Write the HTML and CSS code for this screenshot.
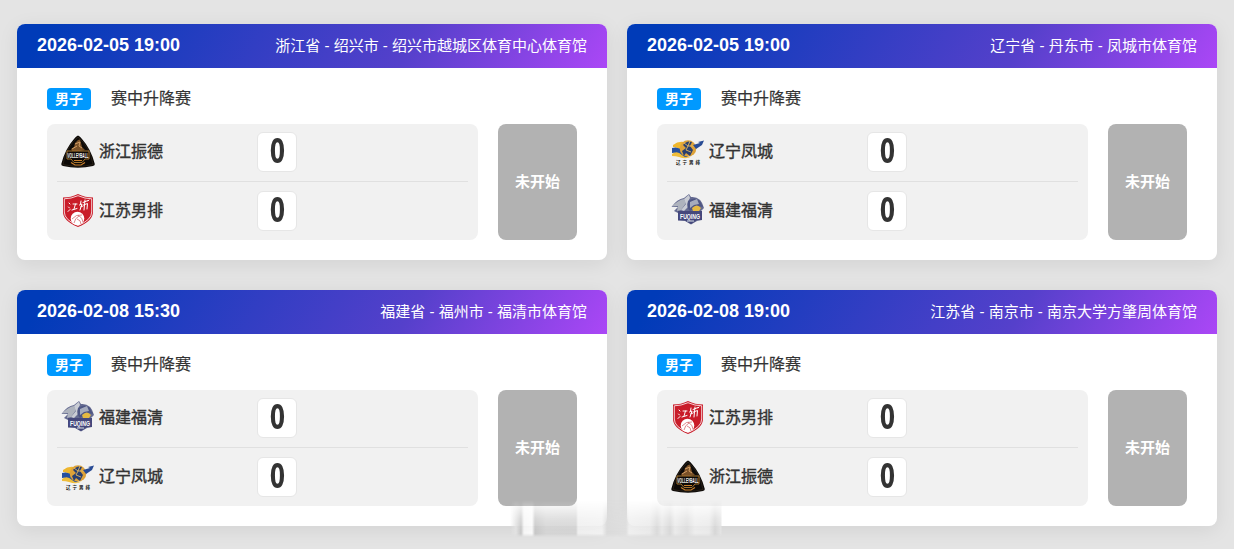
FILE: index.html
```html
<!DOCTYPE html>
<html lang="zh-CN">
<head>
    <meta charset="UTF-8">
    <meta name="viewport" content="width=device-width, initial-scale=1.0">
    <title>赛程</title>
    <link rel="stylesheet" href="styles.css">
</head>
<body>
    <!-- team logos -->
    <svg class="sprite" aria-hidden="true">
        <symbol id="logo-zhejiang" viewBox="0 0 36 36">
            <path d="M18 1.5Q20 2 22 5Q31 15 34.8 30Q35 31.5 33 32Q18 35.5 3 32Q1 31.5 1.3 30Q5 15 14 5Q16 2 18 1.5Z" fill="#0d0a08"/>
            <path d="M18 3Q30 13 33 30.5Q18 34 3 30.5Q6 13 18 3Z" fill="none" stroke="#3f3223" stroke-width=".5"/>
            <path d="M14 13L15 9L18 6L20 5.5L21 9L22 13L25 16L20 17L12 17L11 15Z" fill="#7a5128"/>
            <path d="M15 10L20 8L19 12L22 14M12 15L17 12" fill="none" stroke="#dba66c" stroke-width=".9"/>
            <path d="M7 17H29V25H25L22 28.5H14L11 25H7Z" fill="#0d0a08" stroke="#a3722f" stroke-width="1"/>
            <text x="18" y="24" class="logo-text" font-size="7" textLength="21" lengthAdjust="spacingAndGlyphs" fill="#fff">VOLLEYBALL</text>
            <path d="M14 26.5H22M11 28.5L15 31H21L25 28.5" fill="none" stroke="#c77d2b" stroke-width="1.2"/>
        </symbol>
        <symbol id="logo-jiangsu" viewBox="0 0 36 36">
            <path d="M18 1Q25 4.5 33 4.5V19Q33 28 18 34Q3 28 3 19V4.5Q11 4.5 18 1Z" fill="#c91c29"/>
            <path d="M18 2.7Q25 5.8 31.7 5.8V19Q31.7 27 18 32.5Q4.3 27 4.3 19V5.8Q11 5.8 18 2.7Z" fill="none" stroke="#fff" stroke-width=".8"/>
            <path d="M9 10L10 11M8.5 14L9.5 15M8 18.5L10 16.5M13 11H17M15.5 11L14 16M12 17L17 15.5M21 8L20.5 11M19.5 12L22 11L20 17M20.5 14L23 13M25 7L24 17M23 9.5L28 7.5M23.5 12L27.5 10.5L27 16M28 8L29 7" fill="none" stroke="#fff" stroke-width="1" stroke-linecap="round"/>
            <circle cx="17.5" cy="25.5" r="6.8" fill="#fff"/>
            <path d="M12 26Q16 21 22 22M14 30Q15 25 19 23M18 22Q23 25 23 29M17 26Q21 27 21 31" fill="none" stroke="#d56a70" stroke-width=".8"/>
        </symbol>
        <symbol id="logo-liaoning" viewBox="0 0 36 36">
            <path d="M3 11Q8 7 14 8L16 14L12 17Q7 13 3 13Z" fill="#eeb62e"/>
            <path d="M2 14Q8 12 14 17L18 23Q11 24 7 20Q5 18 2 19Z" fill="#26509f"/>
            <circle cx="18" cy="14.5" r="8.3" fill="#dda23a"/>
            <path d="M13 11Q17 6 22 8L20 12L23 16L20 22L16 19L14 22L12 17L16 14Z" fill="#293f70"/>
            <path d="M14 9L18 12L16 16L21 18M20 7L18 12L24 12" fill="none" stroke="#e3b85e" stroke-width=".9"/>
            <path d="M23 11L30 9L28 8L34 6.5L32 11L26 15Z" fill="#284b94"/>
            <path d="M2 20Q7 16 12 21Q16 25 22 22Q17 26 9 23Q6 22 2 22Z" fill="#efbd3b"/>
            <text x="18" y="30.2" class="logo-text" font-size="4.5" textLength="24" fill="#111">辽宁男排</text>
        </symbol>
        <symbol id="logo-fujian" viewBox="0 0 36 36">
            <path d="M1.5 14Q7 6 14 5L19 1L21 4Q31 3 34 15L31 18L32 27L27 28L21 31.5L15 28L8 27V20L4 18L8 14Z" fill="#656b91"/>
            <path d="M2 13.5Q8 7 14 6L16 10L11 17L7 18L8 13Z" fill="#aeb3bd"/>
            <path d="M14 6L19 1.8L20 5Q17 9 18 14L14 18L11 17L16 11Z" fill="#c9ccd4"/>
            <path d="M18 8Q25 3 30 8L33 14L28 13L20 18Q16 14 18 8Z" fill="#4e5684"/>
            <path d="M20 9L27 6L29 11L24 12L20 15Z" fill="#a5abbd"/>
            <path d="M22 15Q27 10 31 15L29 18H23Z" fill="#e5b942"/>
            <path d="M8 18H32V27H27L21 31L15 27.5H8Z" fill="#45487c"/>
            <text x="20" y="25.5" class="logo-text" font-size="7" textLength="20" lengthAdjust="spacingAndGlyphs" fill="#fff">FUQING</text>
            <path d="M17 28H24" fill="none" stroke="#a9afc5" stroke-width="1.3"/>
        </symbol>
    </svg>

    <main class="match-list">
        <section class="match-card">
            <header class="match-header">
                <span class="match-time">2026-02-05 19:00</span>
                <span class="match-place">浙江省 - 绍兴市 - 绍兴市越城区体育中心体育馆</span>
            </header>
            <div class="match-body">
                <div class="match-type"><span class="badge">男子</span><span class="stage">赛中升降赛</span></div>
                <div class="match-info">
                    <div class="teams">
                        <div class="team"><svg class="logo"><use href="#logo-zhejiang"/></svg><span class="name">浙江振德</span><span class="score"><b>0</b></span></div>
                        <div class="team"><svg class="logo"><use href="#logo-jiangsu"/></svg><span class="name">江苏男排</span><span class="score"><b>0</b></span></div>
                    </div>
                    <div class="status">未开始</div>
                </div>
            </div>
        </section>

        <section class="match-card">
            <header class="match-header">
                <span class="match-time">2026-02-05 19:00</span>
                <span class="match-place">辽宁省 - 丹东市 - 凤城市体育馆</span>
            </header>
            <div class="match-body">
                <div class="match-type"><span class="badge">男子</span><span class="stage">赛中升降赛</span></div>
                <div class="match-info">
                    <div class="teams">
                        <div class="team"><svg class="logo"><use href="#logo-liaoning"/></svg><span class="name">辽宁凤城</span><span class="score"><b>0</b></span></div>
                        <div class="team"><svg class="logo"><use href="#logo-fujian"/></svg><span class="name">福建福清</span><span class="score"><b>0</b></span></div>
                    </div>
                    <div class="status">未开始</div>
                </div>
            </div>
        </section>

        <section class="match-card">
            <header class="match-header">
                <span class="match-time">2026-02-08 15:30</span>
                <span class="match-place">福建省 - 福州市 - 福清市体育馆</span>
            </header>
            <div class="match-body">
                <div class="match-type"><span class="badge">男子</span><span class="stage">赛中升降赛</span></div>
                <div class="match-info">
                    <div class="teams">
                        <div class="team"><svg class="logo"><use href="#logo-fujian"/></svg><span class="name">福建福清</span><span class="score"><b>0</b></span></div>
                        <div class="team"><svg class="logo"><use href="#logo-liaoning"/></svg><span class="name">辽宁凤城</span><span class="score"><b>0</b></span></div>
                    </div>
                    <div class="status">未开始</div>
                </div>
            </div>
        </section>

        <section class="match-card">
            <header class="match-header">
                <span class="match-time">2026-02-08 19:00</span>
                <span class="match-place">江苏省 - 南京市 - 南京大学方肇周体育馆</span>
            </header>
            <div class="match-body">
                <div class="match-type"><span class="badge">男子</span><span class="stage">赛中升降赛</span></div>
                <div class="match-info">
                    <div class="teams">
                        <div class="team"><svg class="logo"><use href="#logo-jiangsu"/></svg><span class="name">江苏男排</span><span class="score"><b>0</b></span></div>
                        <div class="team"><svg class="logo"><use href="#logo-zhejiang"/></svg><span class="name">浙江振德</span><span class="score"><b>0</b></span></div>
                    </div>
                    <div class="status">未开始</div>
                </div>
            </div>
        </section>
    </main>
    <div class="smear"></div>
</body>
</html>
```
FILE: styles.css
```css
* {
    box-sizing: border-box;
}

body {
    margin: 0;
    height: 549px;
    overflow: hidden;
    position: relative;
    background: #e4e4e4;
    color: #333;
    font-family: "Liberation Sans", "Noto Sans CJK SC", sans-serif;
}

.sprite {
    display: none;
}

.match-list {
    display: grid;
    grid-template-columns: 590px 590px;
    gap: 30px 20px;
    padding: 24px 17px;
}

.match-card {
    height: 236px;
    background: #fff;
    border-radius: 8px;
    box-shadow: 0 4px 20px rgba(0, 0, 0, 0.08);
    overflow: hidden;
}

.match-header {
    display: flex;
    justify-content: space-between;
    align-items: center;
    height: 44px;
    padding: 0 20px;
    color: #fff;
    background: linear-gradient(120deg, #003bb8 0%, #003bb8 5%, #5540cb 66%, #ab47f6 100%);
}

.match-time {
    font-size: 18px;
    line-height: 20px;
    font-weight: bold;
    padding-bottom: 2px;
}

.match-place {
    font-size: 15px;
    line-height: 20px;
}

.match-body {
    padding: 20px 30px;
}

.match-type {
    display: flex;
    align-items: center;
    gap: 20px;
    height: 22px;
    margin-bottom: 14px;
}

.badge {
    width: 44px;
    height: 22px;
    border-radius: 4px;
    background: #09f;
    color: #fff;
    font-size: 14px;
    line-height: 22px;
    font-weight: bold;
    text-align: center;
}

.stage {
    font-size: 16px;
    line-height: 20px;
    -webkit-text-stroke: 0.2px #333;
}

.match-info {
    display: flex;
    gap: 20px;
}

.teams {
    width: 431px;
    height: 116px;
    padding: 0 10px;
    border-radius: 8px;
    background: #f1f1f1;
}

.team {
    display: flex;
    align-items: center;
    height: 58px;
    padding: 0 0 1px 3px;
    border-bottom: 1px solid #e0e0e0;
}

.team:last-child {
    padding: 0 0 0 3px;
    border-bottom: none;
}

.logo {
    width: 36px;
    height: 36px;
    margin-right: 3px;
}

.logo-text {
    font-family: "Liberation Sans", "Noto Sans CJK SC", sans-serif;
    font-weight: bold;
    text-anchor: middle;
}

.name {
    width: 158px;
    font-size: 16px;
    line-height: 20px;
    -webkit-text-stroke: 0.4px #333;
}

.score {
    display: flex;
    align-items: center;
    justify-content: center;
    width: 40px;
    height: 40px;
    border: 1px solid #e6e6e6;
    border-radius: 6px;
    background: #fff;
    font-family: "DejaVu Sans", sans-serif;
    font-size: 33px;
    line-height: 38px;
}

/* narrow scoreboard digits */
.score b {
    transform: scaleX(0.67);
}

.status {
    width: 79px;
    height: 116px;
    border-radius: 8px;
    background: #b2b2b2;
    color: #fff;
    font-size: 15px;
    line-height: 116px;
    font-weight: bold;
    text-align: center;
}

/* soft vertical streaks over the bottom edge */
.smear {
    position: absolute;
    left: 510px;
    top: 500px;
    width: 212px;
    height: 37px;
    background: linear-gradient(90deg, rgba(220, 220, 220, 0) 0, #e2e2e2 6px, #c6c6c6 11px, #f6f6f6 14px, #fafafa 22px, #c6c6c6 25px, #d4d4d4 36px, #d3d3d3 66px, #efefef 68px, #f1f1f1 92px, #dadada 97px, #dedede 116px, #efefef 119px, #eaeaea 140px, #dadada 147px, #e8e8e8 152px, #d8d8d8 160px, #ebebeb 165px, #dedede 177px, #ededed 185px, #eaeaea 199px, #d6d6d6 205px, #e4e4e4 211px, rgba(228, 228, 228, 0) 212px);
    -webkit-mask-image: linear-gradient(transparent, rgba(0, 0, 0, 0.7) 50%, #000 90%, transparent);
    mask-image: linear-gradient(transparent, rgba(0, 0, 0, 0.7) 50%, #000 90%, transparent);
}
```
